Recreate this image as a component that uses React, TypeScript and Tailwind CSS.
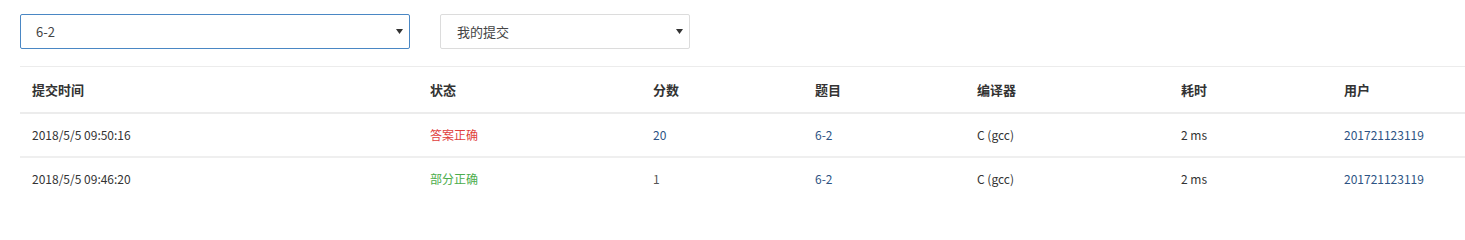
import { ChevronDown } from "lucide-react";

const FONT = "font-['Segoe_UI','Noto_Sans_CJK_SC',sans-serif]";

type Row = {
  time: string;
  status: string;
  ok: boolean;
  score: string;
  scoreLink: boolean;
  problem: string;
  compiler: string;
  cost: string;
  user: string;
};

const ROWS: Row[] = [
  {
    time: "2018/5/5 09:50:16",
    status: "答案正确",
    ok: true,
    score: "20",
    scoreLink: true,
    problem: "6-2",
    compiler: "C (gcc)",
    cost: "2 ms",
    user: "201721123119",
  },
  {
    time: "2018/5/5 09:46:20",
    status: "部分正确",
    ok: false,
    score: "1",
    scoreLink: false,
    problem: "6-2",
    compiler: "C (gcc)",
    cost: "2 ms",
    user: "201721123119",
  },
];

function Caret() {
  return (
    <svg width="7" height="5" viewBox="0 0 7 5" className="shrink-0">
      <path d="M0 0 H7 L3.5 5 Z" fill="#333" />
    </svg>
  );
}

export default function App() {
  return (
    <div className={`w-[1465px] h-[228px] bg-white ${FONT} text-[#333]`}>
      <div className="flex items-center gap-[30px] pl-[20px] pt-[14px]">
        <div className="flex items-center justify-between w-[390px] h-[35px] border border-[#4a87c4] rounded-[2px] pl-[15px] pr-[6px] text-[13px] text-[#444]">
          <span>6-2</span>
          <Caret />
        </div>
        <div className="flex items-center justify-between w-[250px] h-[35px] border border-[#dcdcdc] rounded-[2px] pl-[16px] pr-[6px] text-[13px] text-[#444]">
          <span>我的提交</span>
          <Caret />
        </div>
      </div>

      <div className="ml-[20px] mt-[17px]">
        <table className="w-[1445px] table-fixed border-collapse text-[12px]">
          <colgroup>
            <col className="w-[398px]" />
            <col className="w-[223px]" />
            <col className="w-[162px]" />
            <col className="w-[162px]" />
            <col className="w-[204px]" />
            <col className="w-[163px]" />
            <col />
          </colgroup>
          <thead>
            <tr className="border-t border-b-2 border-[#ececec] h-[46px]">
              {["提交时间", "状态", "分数", "题目", "编译器", "耗时", "用户"].map((h) => (
                <th key={h} className="text-left font-bold text-[13px] px-[12px] text-[#333]">
                  {h}
                </th>
              ))}
            </tr>
          </thead>
          <tbody>
            {ROWS.map((r, i) => (
              <tr key={i} className={`h-[44px] ${i === 0 ? "border-b-2 border-[#efefef]" : ""}`}>
                <td className="px-[12px]">{r.time}</td>
                <td className={`px-[12px] ${r.ok ? "text-[#e0403c]" : "text-[#4cad4c]"}`}>{r.status}</td>
                <td className={`px-[12px] ${r.scoreLink ? "text-[#2d5383]" : "text-[#555]"}`}>{r.score}</td>
                <td className="px-[12px] text-[#2d5383]">{r.problem}</td>
                <td className="px-[12px]">{r.compiler}</td>
                <td className="px-[12px]">{r.cost}</td>
                <td className="px-[12px] text-[#2d5383]">{r.user}</td>
              </tr>
            ))}
          </tbody>
        </table>
      </div>
    </div>
  );
}
